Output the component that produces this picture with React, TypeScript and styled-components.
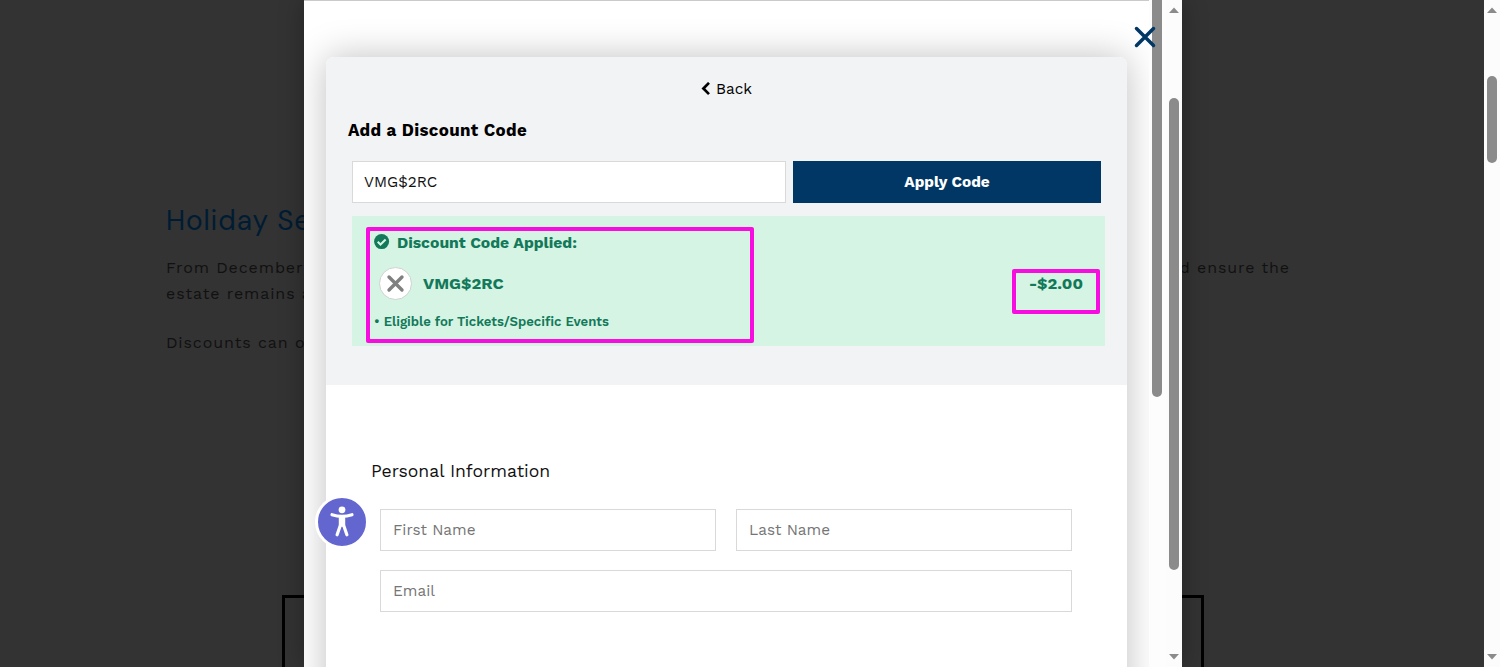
import React from "react";
import styled, { createGlobalStyle } from "styled-components";

const GlobalStyle = createGlobalStyle`
  *, *::before, *::after { box-sizing: border-box; }
  html, body { margin: 0; height: 667px; overflow: hidden; background: #333; }
  body, input, button { font-family: "Work Sans", Inter, "Liberation Sans", sans-serif; }
  h1, h2, h3, p { margin: 0; font-weight: 400; }
  svg { display: block; }
`;

const Screen = styled.div`
  position: relative;
  display: flex;
  width: 1500px;
  height: 667px;
  overflow: hidden;
`;

const Page = styled.main`
  flex: 1;
  height: 667px;
  padding: 203px 166px 0;
  background: #333;
  overflow: hidden;
  color: #111;
`;

const PageHeading = styled.h1`
  font-family: "DM Sans", "Work Sans", Inter, sans-serif;
  font-size: 28px;
  line-height: 36px;
  letter-spacing: 0.9px;
  color: #001c33;
  white-space: nowrap;
`;

const Paragraph = styled.p<{ $top: number }>`
  display: flex;
  justify-content: space-between;
  width: 1124px;
  margin-top: ${(p) => p.$top}px;
  font-size: 16px;
  line-height: 26.4px;
  letter-spacing: 0.9px;
  white-space: nowrap;
`;

const OutlinedPanel = styled.section`
  width: 922px;
  height: 120px;
  margin: 239px 0 0 116px;
  border: 3px solid #000;
`;

const ScrollTrack = styled.div`
  display: flex;
  flex-direction: column;
  align-items: center;
  flex: none;
  width: 16px;
  height: 667px;
  padding: 7px 0 7px;
  background: #fcfcfc;
`;

const Thumb = styled.div<{ $top: number; $height: number }>`
  width: 10px;
  height: ${(p) => p.$height}px;
  margin: ${(p) => p.$top}px 0 auto;
  border-radius: 5px;
  background: #8b8b8b;
`;

const Modal = styled.div`
  position: absolute;
  left: 304px;
  top: 0;
  display: flex;
  width: 878px;
  height: 667px;
  background: #fff;
  box-shadow: 0 0 24px rgba(0, 0, 0, 0.3);
`;

const Frame = styled.div`
  flex: 1;
  height: 667px;
  padding: 0 0 0 22px;
  overflow: hidden;
`;

const FrameRule = styled.div`
  height: 1px;
  margin-left: -22px;
  background: #cacaca;
`;

const Card = styled.div`
  width: 801px;
  height: 700px;
  margin-top: 56px;
  border-radius: 8px;
  background: #fff;
  box-shadow: 0 0 36px rgba(0, 0, 0, 0.25);
`;

const InnerScroll = styled.div`
  flex: none;
  width: 17px;
  height: 667px;
  padding-left: 3px;
  background: #fdfdfd;
`;

const InnerThumb = styled.div`
  width: 10px;
  height: 397px;
  border-radius: 0 0 5px 5px;
  background: #8b8b8b;
`;

const DiscountSection = styled.section`
  height: 328px;
  padding: 20px 22px 0;
  border-radius: 8px 8px 0 0;
  background: #f2f3f5;
`;

const BackLink = styled.a`
  display: flex;
  align-items: center;
  justify-content: center;
  gap: 5px;
  height: 24px;
  font-size: 15.36px;
  color: #000;
`;

const DiscountTitle = styled.h2`
  margin-top: 17px;
  font-size: 16.9px;
  font-weight: 700;
  line-height: 24px;
  letter-spacing: 0.35px;
  color: #000;
`;

const CodeRow = styled.div`
  display: flex;
  gap: 7px;
  margin: 19px 0 0 4px;
`;

const Field = styled.input<{ $width: number; $inset?: number }>`
  width: ${(p) => p.$width}px;
  height: 42px;
  padding: 0 ${(p) => p.$inset ?? 12}px;
  border: 1px solid #d9d9d9;
  border-radius: 0;
  background: #fff;
  font-size: 15.36px;
  color: #111;
  outline: none;
  &::placeholder { color: #757575; opacity: 1; }
`;

const ApplyButton = styled.button`
  width: 308px;
  height: 42px;
  padding: 0;
  border: 0;
  background: #003764;
  color: #fff;
  font-size: 15.36px;
  font-weight: 700;
`;

const Applied = styled.div`
  position: relative;
  width: 753px;
  height: 130px;
  margin: 13px 0 0 4px;
  padding: 14px 22px 0;
  background: #d6f4e3;
  color: #12795a;
  font-weight: 700;
`;

const AppliedTitle = styled.div`
  display: flex;
  align-items: center;
  gap: 7px;
  height: 24px;
  font-size: 15.7px;
`;

const CodeLine = styled.div`
  display: flex;
  align-items: center;
  height: 33px;
  margin: 13px 0 0 5px;
  font-size: 16.4px;
`;

const RemoveButton = styled.button`
  display: flex;
  align-items: center;
  justify-content: center;
  width: 33px;
  height: 33px;
  margin-right: 11px;
  padding: 0;
  border: 1px solid #cdd3d0;
  border-radius: 50%;
  background: #fff;
`;

const Amount = styled.span`
  margin-left: auto;
`;

const Eligible = styled.p`
  margin-top: 13px;
  font-size: 13.15px;
  font-weight: 600;
  line-height: 18px;
`;

const Highlight = styled.div<{ $x: number; $y: number; $w: number; $h: number }>`
  position: absolute;
  left: ${(p) => p.$x}px;
  top: ${(p) => p.$y}px;
  width: ${(p) => p.$w}px;
  height: ${(p) => p.$h}px;
  border: 4px solid #f80de0;
  border-radius: 2px;
`;

const PersonalSection = styled.section`
  padding: 74px 54px 0;
`;

const SectionTitle = styled.h3`
  margin-left: -9px;
  font-size: 17.6px;
  line-height: 24px;
  color: #111;
`;

const Fields = styled.div`
  display: flex;
  flex-wrap: wrap;
  gap: 19px 20px;
  width: 692px;
  margin-top: 26px;
`;

const CloseButton = styled.button`
  position: absolute;
  left: 829px;
  top: 25px;
  padding: 0;
  border: 0;
  background: none;
`;

const AccessButton = styled.button`
  position: absolute;
  left: 11px;
  top: 495px;
  display: flex;
  width: 54px;
  height: 54px;
  padding: 0;
  align-items: center;
  justify-content: center;
  border: 3px solid #fff;
  border-radius: 50%;
  background: #6466d0;
`;

const Arrow = ({ down }: { down?: boolean }) => (
  <svg width="10" height="6" viewBox="0 0 10 6">
    <path d={down ? "M0 0H10L5 5.5Z" : "M0 6H10L5 .5Z"} fill="#8b8b8b" />
  </svg>
);

const ScrollBar = ({ top, height }: { top: number; height: number }) => (
  <ScrollTrack>
    <Arrow />
    <Thumb $top={top} $height={height} />
    <Arrow down />
  </ScrollTrack>
);

export default function App() {
  return (
    <>
      <GlobalStyle />
      <Screen>
        <Page>
          <PageHeading>Holiday Se</PageHeading>
          <Paragraph $top={16}>
            <span>From December</span>
            <span>d ensure the</span>
          </Paragraph>
          <Paragraph $top={0}>estate remains a</Paragraph>
          <Paragraph $top={22}>Discounts can o</Paragraph>
          <OutlinedPanel />
        </Page>
        <ScrollBar top={63} height={87} />
        <Modal>
          <Frame>
            <FrameRule />
            <Card>
              <DiscountSection>
                <BackLink>
                  <svg width="10" height="14" viewBox="0 0 10 14">
                    <path d="M8 .9L2.4 6.5L8 12.1" fill="none" stroke="#000" strokeWidth="2.7" />
                  </svg>
                  <span>Back</span>
                </BackLink>
                <DiscountTitle>Add a Discount Code</DiscountTitle>
                <CodeRow>
                  <Field $width={434} $inset={11} defaultValue="VMG$2RC" />
                  <ApplyButton>Apply Code</ApplyButton>
                </CodeRow>
                <Applied>
                  <AppliedTitle>
                    <svg width="16" height="16" viewBox="0 0 16 16">
                      <circle cx="7.6" cy="7.6" r="7.5" fill="#12795a" />
                      <path d="M3.7 7.8L6.5 10.5L11.6 5.4" fill="none" stroke="#d6f4e3" strokeWidth="2.1" />
                    </svg>
                    <span>Discount Code Applied:</span>
                  </AppliedTitle>
                  <CodeLine>
                    <RemoveButton>
                      <svg width="19" height="19" viewBox="0 0 19 19">
                        <path d="M3 3L16 16M16 3L3 16" fill="none" stroke="#808080" strokeWidth="3.4" strokeLinecap="round" />
                      </svg>
                    </RemoveButton>
                    <span>VMG$2RC</span>
                    <Amount>-$2.00</Amount>
                  </CodeLine>
                  <Eligible>• Eligible for Tickets/Specific Events</Eligible>
                  <Highlight $x={14} $y={11} $w={388} $h={116} />
                  <Highlight $x={660} $y={53} $w={88} $h={45} />
                </Applied>
              </DiscountSection>
              <PersonalSection>
                <SectionTitle>Personal Information</SectionTitle>
                <Fields>
                  <Field $width={336} placeholder="First Name" />
                  <Field $width={336} placeholder="Last Name" />
                  <Field $width={692} placeholder="Email" />
                </Fields>
              </PersonalSection>
            </Card>
          </Frame>
          <InnerScroll>
            <InnerThumb />
          </InnerScroll>
          <ScrollBar top={85} height={472} />
          <CloseButton>
            <svg width="24" height="24" viewBox="0 0 24 24">
              <path d="M3.5 3.5L20.5 20.5M20.5 3.5L3.5 20.5" fill="none" stroke="#003764" strokeWidth="3.5" strokeLinecap="round" />
            </svg>
          </CloseButton>
          <AccessButton>
            <svg width="26" height="34" viewBox="0 0 26 34">
              <circle cx="13" cy="4.8" r="3.4" fill="#fff" />
              <path
                d="M3 9.7Q13 13 23 9.7M11.8 19L8.1 29.8M14.2 19L17.9 29.8"
                fill="none"
                stroke="#fff"
                strokeWidth="3.2"
                strokeLinecap="round"
              />
              <path d="M9.8 11H16.2V20L13 22L9.8 20Z" fill="#fff" />
            </svg>
          </AccessButton>
        </Modal>
      </Screen>
    </>
  );
}
